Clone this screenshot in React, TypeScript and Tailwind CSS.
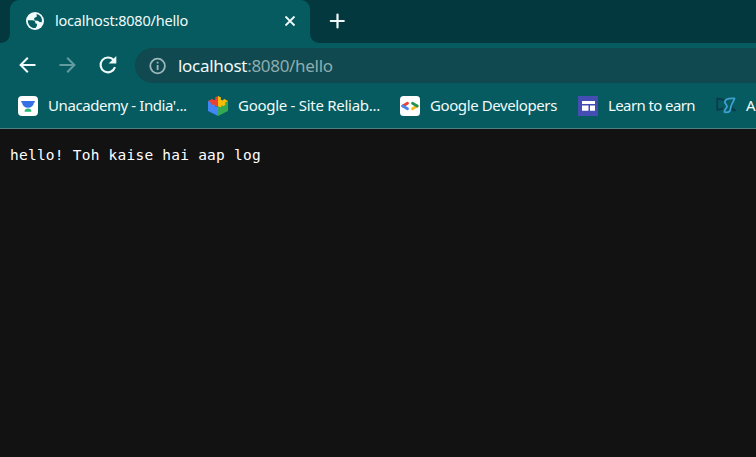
import React from "react";

const ui = "font-['Noto_Sans','Open_Sans',sans-serif]";

function Globe() {
  return (
    <svg className="h-[20px] w-[20px] shrink-0" viewBox="0 0 20 20">
      <circle cx="10" cy="10" r="9" fill="#f1fafa" />
      <path d="M2.9 9.2 7.4 9.2Q10.2 9.3 10.4 11.4L10.4 12.5 12 12.8Q12.4 15 10.6 17C6 17.4 2.5 13.6 2.9 9.2ZM11.6 3.1C14.6 3.7 16.6 6 17 9L16.6 11.2 14.4 11.1 12.9 9.8 9.6 9.4Q8.3 7.4 10 6.6L11.8 5.8Z" fill="#075c61" />
    </svg>
  );
}

function Unacademy() {
  return (
    <svg className="h-5 w-5 shrink-0" viewBox="0 0 20 20">
      <rect width="20" height="20" rx="4" fill="#fff" />
      <path d="M3.2 4.9h13.6v1.6h-.9a5.9 5.2 0 0 1-11.8 0h-.9Z" fill="#356fe5" />
      <path d="M6.6 15.8a3.4 3.2 0 0 1 6.8 0Z" fill="#27b878" />
    </svg>
  );
}

function Puzzle() {
  return (
    <svg className="h-5 w-5 shrink-0" viewBox="0 0 20 20">
      <path d="M0 5 4.4 2.8 5.6 4.2 7.4 3.4 7 1.6 10 0V10L5 11 0 8Z" fill="#e94235" />
      <path d="m10 0 3 1.5-.4 2 2 1 1.6-1.4L20 5v4l-4 2-6 1Z" fill="#fbbc04" />
      <path d="M0 5 2.8 6.5 3 8.6 5 8.8 6 8.2 7.4 10.8 10 10v10L0 15Z" fill="#4285f4" />
      <path d="m20 5-2.8 1.5.1 2.6-2.1 1.1-1.3-1.1-1.2 2.6L10 10v10l10-5Z" fill="#34a853" />
    </svg>
  );
}

function Developers() {
  return (
    <svg className="h-5 w-5 shrink-0" viewBox="0 0 20 20" fill="none" strokeWidth="2.8" strokeLinecap="round">
      <rect width="20" height="20" rx="3.5" fill="#fff" />
      <path d="M2.8 10 7.5 7.2" stroke="#e84537" />
      <path d="m2.8 10 4.7 2.8" stroke="#4a86e8" />
      <path d="m12.5 12.8 4.7-2.8" stroke="#fbbc22" />
      <path d="m12.5 7.2 4.7 2.8" stroke="#239458" />
    </svg>
  );
}

function Learn() {
  return (
    <svg className="h-5 w-5 shrink-0" viewBox="0 0 20 20">
      <path d="M0 0h20v20H0Z" fill="#444eb2" />
      <path d="M4 5h13v3H4ZM4 9.5h6.5v5.2H4ZM12 9.5h5v5.2h-5Z" fill="#fff" />
    </svg>
  );
}

function Sketch() {
  return (
    <svg className="h-5 w-5 shrink-0" viewBox="0 0 20 20" fill="none" strokeLinejoin="round">
      <path d="M8.5 4 1.2 2.5v11.5l6-1.6M16 7l-1 4 4 3.5-4-.8" stroke="#0c3b4b" strokeWidth="1.8" />
      <path d="M18.5 2.4C13.5 2 9.3 3 8.8 5.6c-.3 2.6 2.8 2.8 2.2 5.2-.5 1.9-2.8 2.2-2.6 5 3.4 1.2 6.2.2 6.2-3.4 0-3.4 2.6-5.8 3.9-10Z" stroke="#3f9fcf" strokeWidth="1.8" />
    </svg>
  );
}

function Bookmark({ icon, label, box, text }: { icon: React.ReactNode; label: string; box: string; text: string }) {
  return (
    <div className={`flex shrink-0 items-center gap-[10px] ${box}`}>
      {icon}
      <span className={`-mt-[3px] whitespace-nowrap text-[15px] leading-5 ${text}`}>{label}</span>
    </div>
  );
}

export default function App() {
  return (
    <div className={`flex h-[457px] w-[756px] flex-col overflow-hidden bg-[#121212] text-[#f1fafa] ${ui}`}>
      <div className="flex h-[43px] shrink-0 bg-[#03393e]">
        <div className="h-full w-[10px] bg-[#055b60]">
          <div className="h-full rounded-br-[9px] bg-[#03393e]" />
        </div>
        <div className="h-full w-[300px] bg-[#03393e]">
          <div className="flex h-full items-center rounded-t-[9px] bg-[#055b60] pr-[13px] pb-[2px] pl-[15px]">
            <Globe />
            <span className="-mt-px ml-[10px] whitespace-nowrap text-[14.5px] leading-5 tracking-[-0.2px]">localhost:8080/hello</span>
            <svg className="ml-auto h-[14px] w-[14px]" viewBox="0 0 14 14" fill="none" stroke="currentColor" strokeWidth="1.8">
              <path d="m2.5 2.5 9 9m0-9-9 9" />
            </svg>
          </div>
        </div>
        <div className="h-full flex-1 bg-[#055b60]">
          <div className="flex h-full items-center rounded-bl-[9px] bg-[#03393e] pb-px pl-[19px]">
            <svg className="h-4 w-4" viewBox="0 0 16 16" fill="none" stroke="currentColor" strokeWidth="2.2" strokeLinecap="round">
              <path d="M8.5 1.5v13M1.8 8h13" />
            </svg>
          </div>
        </div>
      </div>
      <div className="flex h-[45px] shrink-0 items-center bg-[#055b60] pl-[18px]">
        <svg className="-mt-px h-5 w-5" viewBox="0 0 20 20" fill="none" stroke="currentColor" strokeWidth="2">
          <path d="M17.5 10H3M9.8 2.8 2.6 10l7.2 7.2" />
        </svg>
        <svg className="-mt-px ml-5 h-5 w-5 text-[#639ba0]" viewBox="0 0 20 20" fill="none" stroke="currentColor" strokeWidth="2">
          <path d="M1.5 10H16M9.2 2.8l7.2 7.2-7.2 7.2" />
        </svg>
        <svg className="-mt-px ml-5 h-5 w-5" viewBox="0 0 20 20">
          <path d="M15.7 5.2A7.4 7.4 0 1 0 17 12.2" fill="none" stroke="currentColor" strokeWidth="2.1" />
          <path d="M18.3 1v7.6h-7.6Z" fill="currentColor" />
        </svg>
        <div className="ml-[17px] flex h-[35px] flex-1 items-center rounded-l-full bg-[#10494f] pl-[13px]">
          <svg className="h-5 w-5 text-[#9cb7ba]" viewBox="0 0 20 20">
            <circle cx="9.6" cy="10" r="7.3" fill="none" stroke="currentColor" strokeWidth="1.8" />
            <path d="M8.7 8.9h1.8v5H8.7ZM8.7 5.8h1.8v1.8H8.7Z" fill="currentColor" />
          </svg>
          <span className="ml-[10px] whitespace-nowrap text-[17px] leading-6 tracking-[-0.3px]">
            localhost<span className="text-[#8fadb0]">:8080/hello</span>
          </span>
        </div>
      </div>
      <div className="flex h-[41px] shrink-0 items-center overflow-hidden border-b border-[#4f7f82] bg-[#055b60] pb-[4px] pl-[18px]">
        <Bookmark icon={<Unacademy />} label="Unacademy - India'..." box="w-[190px]" text="tracking-[-0.42px]" />
        <Bookmark icon={<Puzzle />} label="Google - Site Reliab..." box="w-[192px]" text="tracking-[-0.28px]" />
        <Bookmark icon={<Developers />} label="Google Developers" box="w-[178px]" text="tracking-[-0.4px]" />
        <Bookmark icon={<Learn />} label="Learn to earn" box="w-[138px]" text="tracking-[-0.6px]" />
        <Bookmark icon={<Sketch />} label="A" box="w-[80px]" text="tracking-[-0.2px]" />
      </div>
      <main className="flex-1 pt-4 pl-[10px]">
        <pre className="font-['DejaVu_Sans_Mono',monospace] text-[14.5px] leading-5 tracking-[0.23px] text-white">hello! Toh kaise hai aap log</pre>
      </main>
    </div>
  );
}
